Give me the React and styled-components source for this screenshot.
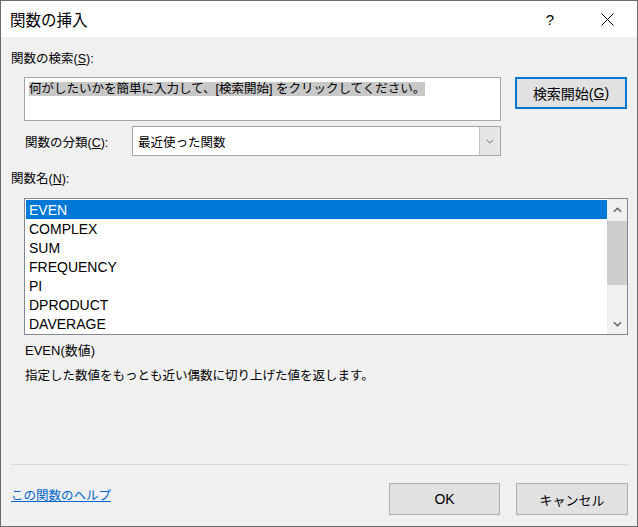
import React from "react";
import styled, { createGlobalStyle } from "styled-components";

const GlobalStyle = createGlobalStyle`
    html, body {
        margin: 0;
        padding: 0;
        background: #f0f0f0;
    }
    body {
        font-family: "Liberation Sans", "Noto Sans CJK JP", sans-serif;
        font-size: 12.5px;
        color: #000;
    }
    * {
        box-sizing: border-box;
    }
`;

const functions = [
    "EVEN",
    "COMPLEX",
    "SUM",
    "FREQUENCY",
    "PI",
    "DPRODUCT",
    "DAVERAGE",
];

function Chevron({ up, size = 9, color = "#606060", weight = 1.6 }) {
    return (
        <svg width={size} height={Math.ceil(size / 2) + 1} viewBox="0 0 10 6">
            <polyline
                points={up ? "1,5 5,1 9,5" : "1,1 5,5 9,1"}
                fill="none"
                stroke={color}
                strokeWidth={weight}
            />
        </svg>
    );
}

function App() {
    return (
        <>
            <GlobalStyle />
            <Window>
                <TitleBar>
                    <Title>関数の挿入</Title>
                    <TitleControls>
                        <TitleButton>?</TitleButton>
                        <TitleButton>
                            <svg width="13" height="13" viewBox="0 0 13 13">
                                <path
                                    d="M0.5 0.5 L12.5 12.5 M12.5 0.5 L0.5 12.5"
                                    stroke="#000"
                                    strokeWidth="1"
                                />
                            </svg>
                        </TitleButton>
                    </TitleControls>
                </TitleBar>

                <Body>
                    <SectionLabel>
                        関数の検索(<u>S</u>):
                    </SectionLabel>
                    <SearchRow>
                        <SearchBox>
                            <Selected>
                                何がしたいかを簡単に入力して、[検索開始] をクリックしてください。
                            </Selected>
                        </SearchBox>
                        <Button $primary $width={112} $size={14}>
                            検索開始(<u>G</u>)
                        </Button>
                    </SearchRow>

                    <CategoryRow>
                        <span>
                            関数の分類(<u>C</u>):
                        </span>
                        <Combo>
                            <ComboText>最近使った関数</ComboText>
                            <ComboButton>
                                <Chevron size={8} weight={1} color="#555" />
                            </ComboButton>
                        </Combo>
                    </CategoryRow>

                    <NameLabel>
                        関数名(<u>N</u>):
                    </NameLabel>
                    <ListBox>
                        <Items>
                            {functions.map((name, i) => (
                                <Item key={name} $selected={i === 0}>
                                    {name}
                                </Item>
                            ))}
                        </Items>
                        <ScrollBar>
                            <ScrollArrow>
                                <Chevron up />
                            </ScrollArrow>
                            <Track>
                                <Thumb />
                            </Track>
                            <ScrollArrow>
                                <Chevron />
                            </ScrollArrow>
                        </ScrollBar>
                    </ListBox>

                    <Syntax>EVEN(数値)</Syntax>
                    <Description>
                        指定した数値をもっとも近い偶数に切り上げた値を返します。
                    </Description>

                    <Spacer />
                    <Separator />

                    <Footer>
                        <HelpLink href="#">この関数のヘルプ</HelpLink>
                        <ButtonGroup>
                            <Button $width={111} $size={14}>OK</Button>
                            <Button $width={112}>キャンセル</Button>
                        </ButtonGroup>
                    </Footer>
                </Body>
            </Window>
        </>
    );
}

const Window = styled.div`
    width: 638px;
    height: 527px;
    border: 1px solid #6b6b6b;
    display: flex;
    flex-direction: column;
    background: #f0f0f0;
`;

const TitleBar = styled.div`
    height: 36px;
    background: #fff;
    display: flex;
    align-items: center;
    padding-left: 9px;
`;

const Title = styled.div`
    font-size: 15.5px;
    flex: 1;
`;

const TitleControls = styled.div`
    display: flex;
    gap: 11px;
    margin-right: 7px;
    height: 100%;
`;

const TitleButton = styled.div`
    width: 46px;
    display: flex;
    align-items: center;
    justify-content: center;
    font-size: 15px;
`;

const Body = styled.div`
    flex: 1;
    display: flex;
    flex-direction: column;
    padding: 13px 9px 11px 9px;
`;

const SectionLabel = styled.div`
    line-height: 18px;
    padding-left: 1px;
`;

const SearchRow = styled.div`
    display: flex;
    align-items: flex-start;
    gap: 14px;
    margin-top: 9px;
    padding-left: 14px;
`;

const SearchBox = styled.div`
    width: 477px;
    height: 44px;
    background: #fff;
    border: 1px solid #a5a5a5;
    padding: 1px 4px;
    line-height: 20px;
`;

const Selected = styled.span`
    background: #c8c8c8;
`;

const Button = styled.div`
    width: ${(p) => p.$width}px;
    height: 32px;
    background: #e1e1e1;
    border: ${(p) => (p.$primary ? "2px solid #0078d7" : "1px solid #adadad")};
    display: flex;
    align-items: center;
    justify-content: center;
    font-size: ${(p) => p.$size || 13}px;
`;

const CategoryRow = styled.div`
    display: grid;
    grid-template-columns: 107px 369px;
    align-items: center;
    margin-top: 5px;
    padding-left: 15px;
`;

const Combo = styled.div`
    height: 30px;
    background: #fff;
    border: 1px solid #a5a5a5;
    display: flex;
`;

const ComboText = styled.div`
    flex: 1;
    display: flex;
    align-items: center;
    padding-left: 5px;
`;

const ComboButton = styled.div`
    width: 21px;
    background: #e6e6e6;
    border-left: 1px solid #c4c4c4;
    display: flex;
    align-items: center;
    justify-content: center;
`;

const NameLabel = styled(SectionLabel)`
    margin-top: 14px;
`;

const ListBox = styled.div`
    height: 137px;
    margin-top: 10px;
    margin-left: 14px;
    background: #fff;
    border: 1px solid #828790;
    display: flex;
`;

const Items = styled.div`
    flex: 1;
    padding: 1px 0 0 1px;
`;

const Item = styled.div`
    height: 19px;
    line-height: 20px;
    padding-left: 3px;
    font-size: 14px;
    background: ${(p) => (p.$selected ? "#0078d7" : "transparent")};
    color: ${(p) => (p.$selected ? "#fff" : "#000")};
`;

const ScrollBar = styled.div`
    width: 20px;
    background: #f0f0f0;
    display: flex;
    flex-direction: column;
`;

const ScrollArrow = styled.div`
    height: 21px;
    display: flex;
    align-items: center;
    justify-content: center;
`;

const Track = styled.div`
    flex: 1;
    padding-top: 1px;
`;

const Thumb = styled.div`
    height: 64px;
    background: #cdcdcd;
`;

const Syntax = styled.div`
    line-height: 18px;
    margin-top: 7px;
    padding-left: 15px;
    font-size: 13px;
`;

const Description = styled(Syntax)`
    margin-top: 7px;
    font-size: 12.5px;
`;

const Spacer = styled.div`
    flex: 1;
`;

const Separator = styled.div`
    height: 1px;
    background: #dadada;
    margin-left: 1px;
`;

const Footer = styled.div`
    display: flex;
    align-items: flex-start;
    justify-content: space-between;
    margin-top: 18px;
`;

const HelpLink = styled.a`
    color: #0066cc;
    text-decoration: underline;
    margin-left: 1px;
    margin-top: 4px;
    line-height: 18px;
`;

const ButtonGroup = styled.div`
    display: flex;
    gap: 16px;
`;

export default App;
